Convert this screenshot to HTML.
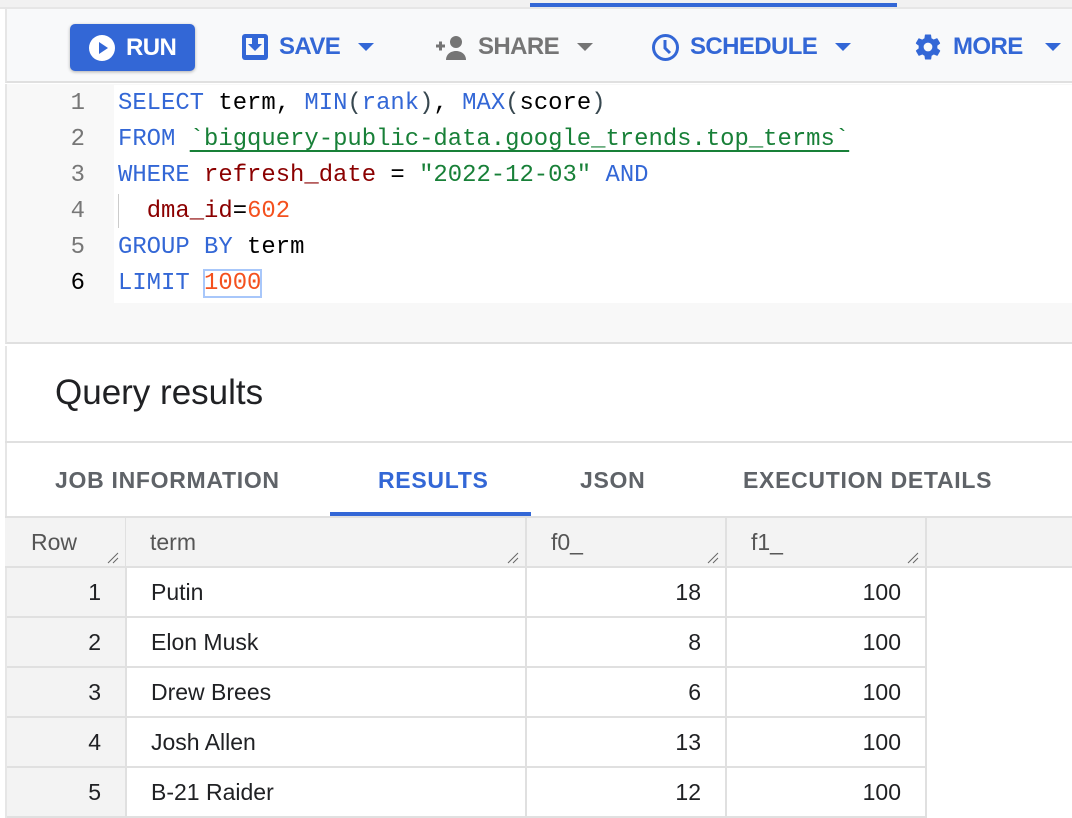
<!DOCTYPE html>
<html><head><style>
*{margin:0;padding:0;box-sizing:border-box}
body{width:1072px;height:818px;overflow:hidden;background:#fff;font-family:"Liberation Sans",sans-serif;position:relative}
.a{position:absolute}
.tb{font-size:24px;color:#3367d6;display:flex;align-items:center;gap:10px;top:30px;height:34px;font-weight:bold;letter-spacing:-0.6px}
.code{font-family:"Liberation Mono",monospace;font-size:23.9px;line-height:36px;white-space:pre}
.ln{color:#777;width:40px;text-align:right}
.k{color:#3367d6}.s{color:#188038}.f{color:#8b0000}.n{color:#f4511e}.p{color:#37474f}
.cell{position:absolute;height:50px;border-right:2px solid #e0e0e0;border-bottom:2px solid #e0e0e0;font-size:23px;color:#202124;display:flex;align-items:center}
.hd{background:#f3f3f3;color:#555}
.rs{position:absolute;right:6px;bottom:2px;width:12px;height:12px}
.tab{position:absolute;top:467px;font-size:23px;color:#5f6368;font-weight:bold;letter-spacing:0.7px}
</style></head><body>
<div class="a" style="left:0;top:0;width:1072px;height:9px;background:#f1f1f1;border-bottom:2px solid #e6e6e6"></div>
<div class="a" style="left:530px;top:3px;width:367px;height:4px;background:#3367d6"></div>
<div class="a" style="left:5px;top:9px;width:1067px;height:74px;background:#f8f9fa;border-bottom:2px solid #e0e0e0;border-left:2px solid #e6e6e6"></div>
<div class="a" style="left:70px;top:24px;width:125px;height:47px;background:#3367d6;border-radius:5px;box-shadow:0 1px 3px rgba(0,0,0,.3);color:#fff;font-size:24px;font-weight:bold;letter-spacing:-0.6px;display:flex;align-items:center;padding-left:18px;gap:10px">
<svg width="28" height="28" viewBox="0 0 28 28"><circle cx="14" cy="14" r="13" fill="#fff"/><path d="M11 8v12l9-6z" fill="#3367d6"/></svg>RUN</div>
<div class="a tb" style="left:241px"><svg width="28" height="28" viewBox="0 0 28 28"><rect x="1" y="1" width="26" height="26" rx="3" fill="#3367d6"/><rect x="5" y="5" width="18" height="17" fill="#f8f9fa"/><path d="M11 5h6v6h4l-7 7-7-7h4z" fill="#3367d6"/></svg>SAVE<svg width="16" height="10" style="margin-left:8px"><path d="M0 1h16L8 9z" fill="#3367d6"/></svg></div>
<div class="a tb" style="left:434px;color:#757575"><svg width="34" height="28" viewBox="0 0 34 28"><path d="M2 13h9M6.5 8.5v9" stroke="#757575" stroke-width="3"/><circle cx="22" cy="9" r="6" fill="#757575"/><path d="M12 27c0-6 5-9 10-9s10 3 10 9z" fill="#757575"/></svg>SHARE<svg width="16" height="10" style="margin-left:8px"><path d="M0 1h16L8 9z" fill="#757575"/></svg></div>
<div class="a tb" style="left:651px"><svg width="29" height="29" viewBox="0 0 29 29"><circle cx="14.5" cy="14.5" r="12" fill="none" stroke="#3367d6" stroke-width="3"/><path d="M14 7v8l5 5" fill="none" stroke="#3367d6" stroke-width="3"/></svg>SCHEDULE<svg width="16" height="10" style="margin-left:8px"><path d="M0 1h16L8 9z" fill="#3367d6"/></svg></div>
<div class="a tb" style="left:913px"><svg width="30" height="30" viewBox="0 0 24 24"><path fill="#3367d6" d="M19.4 13c.04-.33.1-.66.1-1s-.06-.67-.1-1l2.1-1.650c.2-.15.25-.42.12-.64l-2-3.460c-.12-.22-.4-.3-.6-.22l-2.500 1c-.5-.4-1.100-.73-1.700-.98l-.37-2.650A.5.5 0 0 0 14 2h-4c-.25 0-.46.18-.5.42l-.37 2.650c-.6.25-1.200.58-1.700.98l-2.500-1c-.23-.08-.48 0-.6.22l-2 3.460c-.13.22-.07.49.12.64L4.6 11c-.04.33-.1.66-.1 1s.06.67.1 1l-2.100 1.650c-.2.15-.25.42-.12.64l2 3.460c.12.22.4.3.6.22l2.500-1c.5.4 1.100.73 1.700.98l.37 2.650c.04.24.25.42.5.42h4c.25 0 .46-.18.5-.42l.37-2.650c.6-.25 1.200-.58 1.700-.98l2.500 1c.23.08.48 0 .6-.22l2-3.460c.12-.22.07-.49-.12-.64zM12 15.5a3.5 3.5 0 1 1 0-7 3.5 3.5 0 0 1 0 7z"/></svg>MORE<svg width="16" height="10" style="margin-left:12px"><path d="M0 1h16L8 9z" fill="#3367d6"/></svg></div>

<div class="a" style="left:5px;top:84px;width:1067px;height:260px;background:#f8f8f8;border-left:2px solid #e6e6e6;border-bottom:2px solid #e0e0e0"></div>
<div class="a" style="left:114px;top:85px;width:958px;height:218px;background:#fff"></div>
<div class="a code" style="left:45px;top:86px"><div class="ln">1</div><div class="ln">2</div><div class="ln">3</div><div class="ln">4</div><div class="ln">5</div><div class="ln" style="color:#000">6</div></div>
<div class="a" style="left:118px;top:194px;width:1px;height:34px;background:#ccc"></div>
<div class="a code" style="left:118px;top:86px;color:#000"><div><span class="k">SELECT</span> term, <span class="k">MIN</span><span class="p">(</span><span class="k">rank</span><span class="p">)</span>, <span class="k">MAX</span><span class="p">(</span>score<span class="p">)</span></div><div><span class="k">FROM</span> <span class="s" style="text-decoration:underline;text-underline-offset:5px;text-decoration-thickness:2px">`bigquery-public-data.google_trends.top_terms`</span></div><div><span class="k">WHERE</span> <span class="f">refresh_date</span> = <span class="s">"2022-12-03"</span> <span class="k">AND</span></div><div>  <span class="f">dma_id</span>=<span class="n">602</span></div><div><span class="k">GROUP</span> <span class="k">BY</span> term</div><div><span class="k">LIMIT</span> <span class="n" style="outline:2px solid #a8c7fa;outline-offset:-1px">1000</span></div></div>

<div class="a" style="left:5px;top:346px;width:2px;height:472px;background:#e6e6e6"></div>
<div class="a" style="left:55px;top:373px;font-size:35px;color:#202124">Query results</div>
<div class="a" style="left:5px;top:441px;width:1067px;height:2px;background:#e0e0e0"></div>
<div class="tab" style="left:55px">JOB INFORMATION</div>
<div class="tab" style="left:378px;color:#3367d6">RESULTS</div>
<div class="tab" style="left:580px">JSON</div>
<div class="tab" style="left:743px">EXECUTION DETAILS</div>
<div class="a" style="left:330px;top:512px;width:201px;height:4px;background:#3367d6"></div>
<div class="a" style="left:5px;top:516px;width:1067px;height:52px;background:#f3f3f3;border-top:2px solid #e0e0e0;border-bottom:2px solid #e0e0e0"></div>

<div id="t"></div>
<script>
var cols=[[7,120],[126,401],[527,200],[727,200]];
var hd=["Row","term","f0_","f1_"];
var rows=[["1","Putin","18","100"],["2","Elon Musk","8","100"],["3","Drew Brees","6","100"],["4","Josh Allen","13","100"],["5","B-21 Raider","12","100"]];
var h="";
var rz='<svg class="rs" viewBox="0 0 12 12"><path d="M1 11L11 1M6 11L11 6" stroke="#666" stroke-width="1"/></svg>';
for(var c=0;c<4;c++){h+='<div class="cell hd" style="left:'+cols[c][0]+'px;top:518px;width:'+cols[c][1]+'px;padding-left:24px">'+hd[c]+rz+'</div>';}
for(var r=0;r<5;r++){var y=568+r*50;for(var c=0;c<4;c++){var st='left:'+cols[c][0]+'px;top:'+y+'px;width:'+cols[c][1]+'px;';
if(c==0)st+='background:#f3f3f3;justify-content:flex-end;padding-right:24px;';else if(c==1)st+='padding-left:25px;';else st+='justify-content:flex-end;padding-right:24px;';
h+='<div class="cell" style="'+st+'">'+rows[r][c]+'</div>';}}
document.getElementById('t').innerHTML=h;
</script>
</body></html>
